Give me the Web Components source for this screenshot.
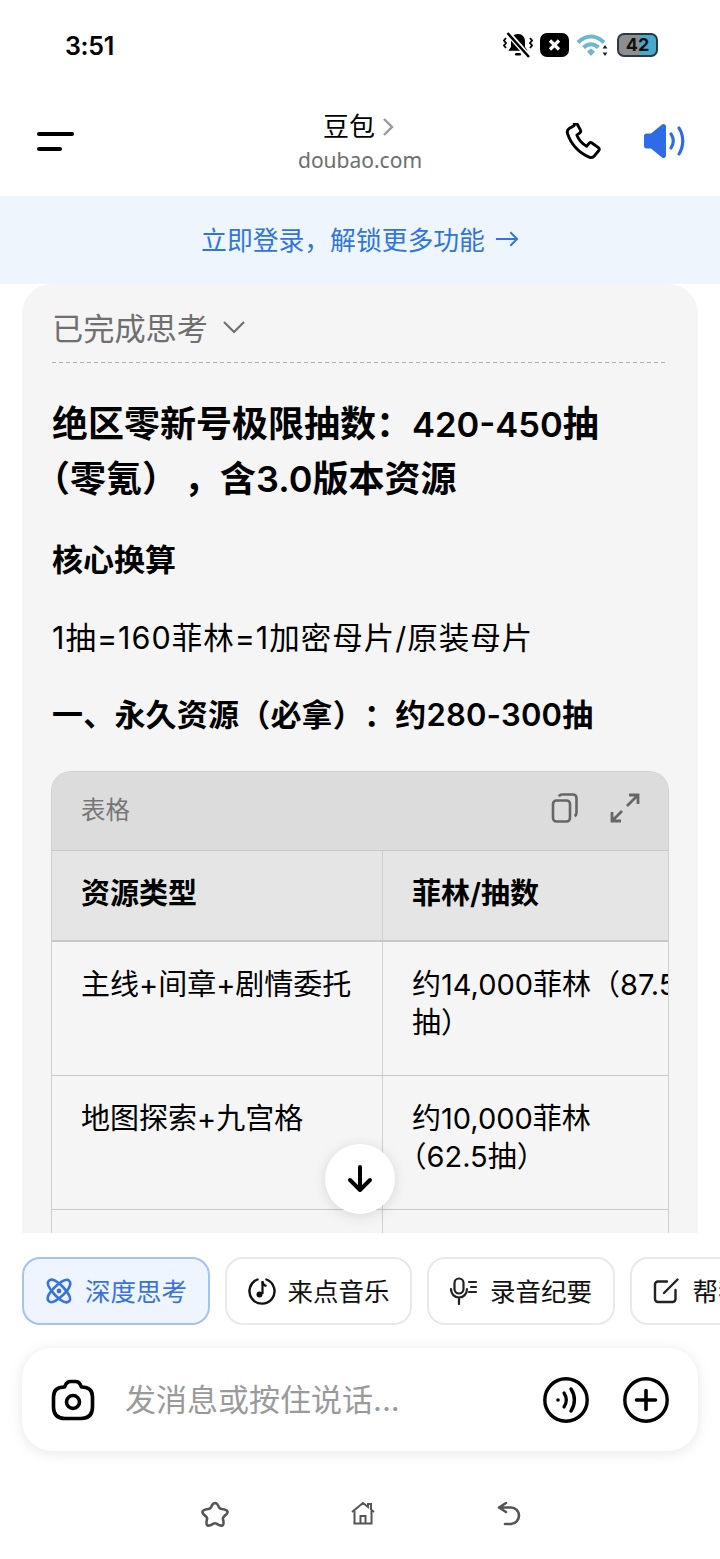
<!DOCTYPE html>
<html lang="zh-CN">
<head>
<meta charset="utf-8">
<title>豆包</title>
<style>
html, body { margin: 0; padding: 0; background: #fff; }
body { font-family: Inter, "Noto Sans CJK SC", "Noto Sans", sans-serif; color: #000; width: 720px; height: 1559px; overflow: hidden; }
</style>
</head>
<body>
<app-page>
  <status-bar slot="top"></status-bar>
  <top-bar slot="top"></top-bar>
  <login-banner slot="top"></login-banner>
  <chat-card slot="chat"></chat-card>
  <scroll-button slot="chat"></scroll-button>
  <chip-row slot="bottom"></chip-row>
  <input-box slot="bottom"></input-box>
  <nav-bar slot="bottom"></nav-bar>
</app-page>

<script>
// small helper so each component stays short
function shadow(el, html) {
  el.attachShadow({mode: 'open'}).innerHTML = html;
}

class AppPage extends HTMLElement {
  constructor() {
    super();
    shadow(this, `
<style>
:host { display: flex; flex-direction: column; width: 720px; height: 1559px; position: relative; }
.chat { height: 949px; overflow: hidden; flex: none; position: relative; }
</style>
<slot name="top"></slot>
<div class="chat"><slot name="chat"></slot></div>
<slot name="bottom"></slot>`);
  }
}

class StatusBar extends HTMLElement {
  constructor() {
    super();
    shadow(this, `
<style>
:host { display: flex; align-items: center; justify-content: space-between; height: 90px; padding: 0 62px 0 65px; box-sizing: border-box; }
.time { font: 600 25px/30px Inter, sans-serif; letter-spacing: -.3px; position: relative; top: 1px; }
.icons { display: flex; align-items: center; gap: 7px; }
svg { display: block; }
.batt { width: 41px; height: 24px; box-sizing: border-box; border: 2px solid #2b3a40; border-radius: 7px; font: 700 18px/20px Inter, sans-serif; text-align: center; background: linear-gradient(90deg, #8e8e90 0 56%, #45aacb 56%); color: #111; }
</style>
<div class="time">3:51</div>
<div class="icons">
  <svg width="30" height="28" viewBox="0 0 30 28" fill="none">
    <path d="M15 3c-4.600 0-7 3.400-7 7.500v5.500l-2.600 3.700h19.200L22 16v-5.500C22 6.400 19.600 3 15 3z" fill="#000"/>
    <rect x="12" y="22" width="6" height="2.500" rx="1.200" fill="#000"/>
    <path d="M5 2l21 24" stroke="#fff" stroke-width="5.500"/>
    <path d="M4.500 2l21.500 24" stroke="#000" stroke-width="2.500"/>
    <path d="M3 7l-2 2.500 2 2.500-2 2.500 2 2.500M27 7l2 2.500-2 2.500 2 2.500-2 2.500" stroke="#000" stroke-width="1.800"/>
  </svg>
  <svg width="29" height="24" viewBox="0 0 29 24"><rect width="29" height="24" rx="7" fill="#000"/><path d="M10 7.500l9 9M19 7.500l-9 9" stroke="#fff" stroke-width="3.200"/></svg>
  <svg width="34" height="24" viewBox="0 0 34 24" fill="none">
    <path d="M2 9.500C10 1.500 20 1.500 28 9.500" stroke="#6db8cd" stroke-width="4"/>
    <path d="M7.500 14.500c4.500-4.500 10.500-4.500 15 0" stroke="#6db8cd" stroke-width="4"/>
    <path d="M11 18.500l4-3 4 3-4 4.500z" fill="#6db8cd"/>
    <path d="M29 12l2.500 3.500h-5zM29 23l2.500-3.500h-5z" fill="#222"/>
  </svg>
  <div class="batt">42</div>
</div>`);
  }
}

class TopBar extends HTMLElement {
  constructor() {
    super();
    shadow(this, `
<style>
:host { display: flex; align-items: center; justify-content: space-between; height: 106px; padding: 0 34px 4px 37px; box-sizing: border-box; position: relative; }
.menu { width: 37px; display: flex; flex-direction: column; gap: 11px; }
.menu i { display: block; height: 4px; border-radius: 2px; background: #000; width: 37px; }
.menu i + i { width: 25px; }
.title { position: absolute; left: 0; right: 0; top: 19px; text-align: center; pointer-events: none; }
.name { font-size: 26px; line-height: 36px; display: flex; justify-content: center; align-items: center; gap: 7px; margin-left: -3px; }
.url { font: 21px/28px "Noto Sans", sans-serif; color: #6e6e6e; margin-top: 1px; }
.right { display: flex; align-items: center; gap: 41px; }
svg { display: block; }
</style>
<div class="menu"><i></i><i></i></div>
<div class="title">
  <div class="name">豆包<svg width="12" height="20" viewBox="0 0 12 20" fill="none"><path d="M2 2l8 8-8 8" stroke="#999" stroke-width="2.400"/></svg></div>
  <div class="url">doubao.com</div>
</div>
<div class="right">
  <svg width="37" height="37" viewBox="0 0 38 38" fill="none"><path d="M9.500 2.500L4.300 5.600C2.400 6.800 2 9 2.700 11.200 6 21.500 14.500 31 24.800 35c2.200.8 4.400.2 5.600-1.500l4.300-5.200c.8-1 .6-2.300-.4-3l-6.600-4.800c-1-.7-2.200-.5-3 .4l-2.500 3c-4.500-2.500-8.300-7-10-11.500l3-2.300c1-.8 1.200-2 .6-3l-3.800-6.900c-.6-1-1.700-1.300-2.500-.7z" stroke="#000" stroke-width="3" stroke-linejoin="round"/></svg>
  <svg width="43" height="36" viewBox="0 0 43 36" fill="none"><path d="M1 13c0-1.500 1-2.500 2.500-2.500H8L19 1.500c1.500-1.200 4-.3 4 2v29c0 2.300-2.500 3.200-4 2L8 25.500H3.500C2 25.500 1 24.500 1 23z" fill="#2f6be6"/><path d="M28 11c3 4 3 10 0 14M36 5c5 8 5 18 0 26" stroke="#2f6be6" stroke-width="3.200" stroke-linecap="round"/></svg>
</div>`);
  }
}

class LoginBanner extends HTMLElement {
  constructor() {
    super();
    shadow(this, `
<style>
:host { display: flex; align-items: center; justify-content: center; height: 88px; padding-bottom: 3px; box-sizing: border-box; background: #eef5fd; color: #2f75dc; font-size: 25.800px; gap: 10px; }
svg { display: block; margin-top: 1px; }
</style>
<span>立即登录，解锁更多功能</span>
<svg width="24" height="18" viewBox="0 0 25 18" fill="none"><path d="M1 9h22M16 2l7 7-7 7" stroke="#2f75dc" stroke-width="2"/></svg>`);
  }
}

class ChatCard extends HTMLElement {
  constructor() {
    super();
    shadow(this, `
<style>
:host { display: block; margin: 0 22px; background: #f5f5f5; border-radius: 30px 30px 0 0; padding: 0 30px; height: 949px; box-sizing: border-box; overflow: hidden; }
.think { height: 78px; box-sizing: border-box; display: flex; align-items: center; gap: 14px; color: #6f6f6f; font-size: 31.200px; padding-top: 7px; }
.dash { height: 1px; background: repeating-linear-gradient(90deg, #b0b0b0 0 4px, transparent 4px 7px); }
h1 { margin: 34px 0 0; font-size: 36px; line-height: 54px; font-weight: 600; text-spacing-trim: trim-start; }
h1 .line { display: block; white-space: nowrap; }
h1 .num { font-size: 34.500px; }
h1 .comma { margin-left: 24px; }
h2 { margin: 0; font-size: 31px; font-weight: 600; line-height: 40px; text-spacing-trim: space-all; }
h2.core { margin-top: 34px; }
h2.first { margin-top: 37px; letter-spacing: .2px; }
p { margin: 38px 0 0; font-size: 30.500px; line-height: 40px; letter-spacing: 1px; }
svg { display: block; }
</style>
<div class="think">已完成思考<svg width="24" height="14" viewBox="0 0 24 14" fill="none"><path d="M2 2l10 10L22 2" stroke="#6f6f6f" stroke-width="2.200"/></svg></div>
<div class="dash"></div>
<h1><span class="line">绝区零新号极限抽数：<span class="num">420-450</span>抽</span><span class="line">（零氪）<span class="comma">，</span>含3.0版本资源</span></h1>
<h2 class="core">核心换算</h2>
<p>1抽=160菲林=1加密母片/原装母片</p>
<h2 class="first">一、永久资源（必拿）：约280-300抽</h2>
<resource-table></resource-table>`);
  }
}

class ResourceTable extends HTMLElement {
  constructor() {
    super();
    const rows = [
      ['主线+间章+剧情委托', '约14,000菲林（87.5', '抽）'],
      ['地图探索+九宫格', '约10,000菲林', '（62.5抽）'],
      ['', '', '']
    ];
    shadow(this, `
<style>
:host { display: block; margin: 36px 0 0 -1px; border: 1px solid #cfcfcf; border-bottom: 0; border-radius: 20px 20px 0 0; overflow: hidden; width: 618px; box-sizing: border-box; }
.head { height: 79px; background: #dcdcdc; display: flex; align-items: center; justify-content: space-between; padding: 0 28px 6px 29px; box-sizing: border-box; color: #777; font-size: 24.500px; border-bottom: 1px solid #c8c8c8; }
.icons { display: flex; align-items: center; gap: 31px; }
.row { display: grid; grid-template-columns: 330px 1fr; border-bottom: 1px solid #c8c8c8; }
.row > div { padding: 24px 0 0 29px; font-size: 29px; line-height: 38px; box-sizing: border-box; height: 133px; overflow: hidden; min-width: 0; }
.row > div + div { border-left: 1px solid #cfcfcf; }
.row.th { background: #e5e5e5; border-bottom-width: 2px; }
.row.th > div { font-weight: 600; height: 89px; }
.val { white-space: nowrap; text-spacing-trim: trim-start; }
.val span { display: block; min-height: 38px; }
svg { display: block; }
</style>
<div class="head">
  <span>表格</span>
  <div class="icons">
    <svg width="28" height="30" viewBox="0 0 28 30" fill="none" stroke="#666" stroke-width="2.600" stroke-linejoin="round"><rect x="2" y="7.500" width="17" height="21" rx="3.500"/><path d="M8 3.500C8.500 2.300 9.500 1.500 11 1.500h11c2 0 3.500 1.500 3.500 3.500v15c0 1.500-.8 2.500-2 3"/></svg>
    <svg width="30" height="30" viewBox="0 0 30 30" fill="none" stroke="#666" stroke-width="2.800"><path d="M17 13L28 2M19 2h9v9M12 18L2 28M2 19v9h9"/></svg>
  </div>
</div>
<div class="row th"><div>资源类型</div><div>菲林/抽数</div></div>
${rows.map(r => `<div class="row"><div>${r[0]}</div><div class="val"><span>${r[1]}</span><span>${r[2]}</span></div></div>`).join('')}`);
  }
}

class ScrollButton extends HTMLElement {
  constructor() {
    super();
    shadow(this, `
<style>
:host { position: absolute; left: 325px; top: 860px; width: 70px; height: 70px; border-radius: 50%; background: #fff; box-shadow: 0 2px 14px rgba(0,0,0,.12); display: flex; align-items: center; justify-content: center; }
svg { display: block; }
</style>
<svg width="26" height="28" viewBox="0 0 26 28" fill="none" stroke="#000" stroke-width="4" stroke-linecap="round" stroke-linejoin="round"><path d="M13 2v23M3 15l10 10 10-10"/></svg>`);
  }
}

class ChipRow extends HTMLElement {
  constructor() {
    super();
    shadow(this, `
<style>
:host { display: flex; gap: 15px; padding: 24px 0 0 22px; height: 92px; box-sizing: border-box; overflow: hidden; flex: none; width: 720px; }
.chip { flex: none; width: 187.500px; height: 68px; box-sizing: border-box; border: 2px solid #e9e9e9; border-radius: 18px; display: flex; align-items: center; gap: 12px; padding: 0 0 4px 21px; font-size: 25.500px; background: #fff; color: #111; }
.chip.on { background: #eff5fe; border-color: #a5c3f1; color: #3a72dc; }
.chip svg { margin-top: 4px; }
.chip.write { gap: 14px; }
svg { display: block; flex: none; }
</style>
<div class="chip on">
  <svg width="28" height="28" viewBox="0 0 28 28" fill="none" stroke="#3a72dc" stroke-width="2.600"><path d="M3.800 3.800c3-3 9 .5 14.200 6.200s9.200 11.200 6.200 14.200-9-.5-14.200-6.200S.8 6.800 3.800 3.800z"/><path d="M24.200 3.800c3 3-.5 9-6.200 14.200S6.800 27.200 3.800 24.200s.5-9 6.200-14.200S21.200.8 24.200 3.800z"/><circle cx="14" cy="14" r="2.400" fill="#3a72dc" stroke="none"/></svg>
  深度思考
</div>
<div class="chip">
  <svg width="28" height="28" viewBox="0 0 28 28" fill="none"><path d="M9.500 2.500a12.500 12.500 0 1 0 9 0" stroke="#111" stroke-width="2.400" stroke-linecap="round"/><path d="M14.500 4v13" stroke="#111" stroke-width="2.200"/><path d="M14.500 5c.5 2.500 2 3.500 4 4" stroke="#111" stroke-width="2.200"/><circle cx="11.500" cy="17.500" r="3" fill="#111"/></svg>
  来点音乐
</div>
<div class="chip">
  <svg width="28" height="28" viewBox="0 0 28 28" fill="none" stroke="#222" stroke-width="2.200"><rect x="4.500" y="1.500" width="9" height="15" rx="4.500"/><path d="M1 12c0 5 3.500 8.500 8 8.500s8-3.500 8-8.500M9 20.500V27" stroke-linecap="round"/><path d="M19 5h7M21 10h5M19 15h7" stroke-linecap="round"/></svg>
  录音纪要
</div>
<div class="chip write">
  <svg width="26" height="26" viewBox="0 0 26 26" fill="none" stroke="#222" stroke-width="2.400" stroke-linecap="round"><path d="M14 3.500H5a3 3 0 0 0-3 3V21a3 3 0 0 0 3 3h14.500a3 3 0 0 0 3-3v-9"/><path d="M11 15L24.500 1.500"/></svg>
  帮我写作
</div>`);
  }
}

class InputBox extends HTMLElement {
  constructor() {
    super();
    shadow(this, `
<style>
:host { display: flex; align-items: center; margin: 23px 22px 0; height: 103px; flex: none; background: #fff; border-radius: 30px; box-shadow: 0 2px 14px rgba(0,0,0,.1); padding: 0 29px; box-sizing: border-box; }
.ph { flex: 1; color: #9a9a9a; font-size: 31px; margin: 0 0 5px 30px; }
.right { display: flex; gap: 34px; }
svg { display: block; }
</style>
<svg width="44" height="42" viewBox="0 0 44 42" fill="none" stroke="#000" stroke-width="3.600" stroke-linejoin="round"><path d="M13.500 8L15 5Q16.500 2.500 19.500 2.500H24.500Q27.500 2.500 29 5L30.500 8Q41.500 8 41.500 18V28Q41.500 39.500 30 39.500H14Q2.500 39.500 2.500 28V18Q2.500 8 13.500 8Z"/><circle cx="22" cy="23" r="6.500"/></svg>
<div class="ph">发消息或按住说话...</div>
<div class="right">
  <svg width="46" height="46" viewBox="0 0 46 46" fill="none" stroke="#000"><circle cx="23" cy="23" r="21.200" stroke-width="3.400"/><circle cx="15" cy="23" r="1.800" fill="#000" stroke="none"/><path d="M21 16c3 4.500 3 9.500 0 14" stroke-width="3.200" stroke-linecap="round"/><path d="M28 12c4.500 6.500 4.500 15.500 0 22" stroke-width="3.400" stroke-linecap="round"/></svg>
  <svg width="46" height="46" viewBox="0 0 46 46" fill="none" stroke="#000"><circle cx="23" cy="23" r="21.200" stroke-width="3.400"/><path d="M13.500 23h19M23 13.500v19" stroke-width="3.600" stroke-linecap="round"/></svg>
</div>`);
  }
}

class NavBar extends HTMLElement {
  constructor() {
    super();
    shadow(this, `
<style>
:host { display: flex; justify-content: center; gap: 122px; padding: 50px 0 0 1px; flex: none; }
svg { display: block; }
</style>
<svg width="28" height="28" viewBox="0 0 28 28" fill="none" stroke="#555" stroke-width="2.600" stroke-linejoin="round"><path d="M14 2c2.200 0 3 1.800 4 4.300.5 1.200 1.200 1.500 2.500 1.700 3 .4 5.500.8 6 2.600.5 1.900-1.500 3.400-3.700 5.100-.9.700-1.100 1.400-.8 2.500.7 2.800 1.200 5-.4 6.100-1.700 1.100-3.700-.2-6-1.600-.9-.5-2.300-.5-3.200 0-2.300 1.400-4.300 2.700-6 1.600-1.600-1.100-1.100-3.300-.4-6.100.3-1.100.1-1.800-.8-2.500-2.200-1.700-4.200-3.200-3.700-5.100.5-1.800 3-2.200 6-2.600 1.300-.2 2-.5 2.500-1.700C11 3.800 11.800 2 14 2z"/></svg>
<svg width="24" height="24" viewBox="0 0 24 24" fill="none" stroke="#555" stroke-width="2"><path d="M1 11L12 2l5 4V3h3v5.500l3 2.500"/><path d="M3.500 10v12.500h17V10M9.500 22.500V15h5v7.500"/></svg>
<svg width="24" height="26" viewBox="0 0 24 26" fill="none" stroke="#555" stroke-width="2.600" stroke-linejoin="round" stroke-linecap="round"><path d="M9 2L2 6.500 9 11M2.500 6.500H14c4.500 0 8 3.500 8 8s-3.500 8.500-8 8.500H8"/></svg>`);
  }
}

customElements.define('app-page', AppPage);
customElements.define('status-bar', StatusBar);
customElements.define('top-bar', TopBar);
customElements.define('login-banner', LoginBanner);
customElements.define('chat-card', ChatCard);
customElements.define('resource-table', ResourceTable);
customElements.define('scroll-button', ScrollButton);
customElements.define('chip-row', ChipRow);
customElements.define('input-box', InputBox);
customElements.define('nav-bar', NavBar);
</script>
</body>
</html>
